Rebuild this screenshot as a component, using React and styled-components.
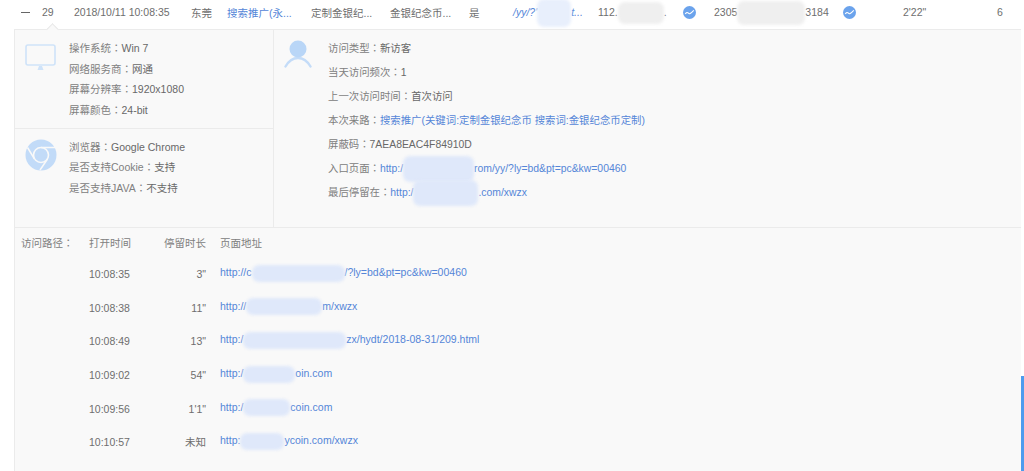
import React from "react";
import styled, { createGlobalStyle } from "styled-components";

const GlobalStyle = createGlobalStyle`
  html, body {
    margin: 0;
    padding: 0;
    background: #fff;
    overflow: hidden;
  }
  body {
    font-family: "Liberation Sans", "Noto Sans CJK SC", sans-serif;
    font-size: 10.5px;
    color: #707070;
  }
`;

const Page = styled.div`
  position: relative;
  width: 1024px;
  height: 471px;
  overflow: hidden;
`;

const VisitRow = styled.div`
  display: grid;
  grid-template-columns: 21px 32px 117px 36px 84px 79px 79px 44px 85px 85px 31px 129px 60px 94px 27px;
  height: 24px;
  padding: 0 0 5px 21px;
  align-items: center;
  white-space: nowrap;
  color: #6e6e6e;
`;

const Collapse = styled.span`
  display: block;
  width: 9px;
  height: 1px;
  background: #666;
`;

const RowLink = styled.span`
  color: #5586d8;
  font-style: ${(props) => (props.italic ? "italic" : "normal")};
`;

const Smudge = styled.span`
  display: inline-block;
  vertical-align: middle;
  width: ${(props) => props.w}px;
  height: ${(props) => props.h || 15}px;
  margin: -14px 0;
  background: ${(props) => props.color || "#dfe8fa"};
  border-radius: 7px;
  filter: blur(1.5px);
`;

const Colon = styled.span`
  font-family: "Noto Sans CJK TC", sans-serif;
`;

const Panel = styled.div`
  position: relative;
  width: 1006px;
  height: 441px;
  margin-left: 14px;
  background: #f9f9f9;
  border-top: 1px solid #ebebeb;
  border-left: 1px solid #ebebeb;
`;

const Caret = styled.span`
  position: absolute;
  left: 33px;
  top: -5px;
  width: 8px;
  height: 8px;
  background: #f9f9f9;
  border-top: 1px solid #e8e8e8;
  border-left: 1px solid #e8e8e8;
  transform: rotate(45deg);
`;

const InfoArea = styled.div`
  display: flex;
  height: 197px;
  border-bottom: 1px solid #ebebeb;
`;

const DeviceColumn = styled.div`
  display: flex;
  flex-direction: column;
  width: 258px;
  border-right: 1px solid #ebebeb;
`;

const DeviceBlock = styled.div`
  display: flex;
  flex: 1;
  padding-left: 10px;
  & + & {
    border-top: 1px solid #ebebeb;
  }
`;

const IconSlot = styled.div`
  width: 44px;
  flex: none;
  padding-top: ${(props) => props.top}px;
`;

const LineList = styled.div`
  display: flex;
  flex-direction: column;
  padding-top: ${(props) => props.top}px;
`;

const InfoLine = styled.div`
  height: ${(props) => props.h}px;
  line-height: ${(props) => props.h}px;
  white-space: nowrap;
  color: #808080;
`;

const Value = styled.span`
  color: #686868;
`;

const VisitorColumn = styled.div`
  display: flex;
  flex: 1;
  padding-left: 10px;
  font-size: 10.4px;
`;

const PathArea = styled.div`
  display: grid;
  grid-template-columns: 68px 66px 51px 1fr;
  grid-template-rows: 23.5px;
  grid-auto-rows: 33.7px;
  padding: 5px 0 0 6px;
  white-space: nowrap;
`;

const PathHead = styled.div`
  line-height: 20px;
  height: 20px;
  color: #808080;
  text-align: ${(props) => (props.right ? "right" : "left")};
  padding-left: ${(props) => props.pad || 0}px;
`;

const PathCell = styled.div`
  grid-column: ${(props) => props.col};
  line-height: 20px;
  margin-top: 7.5px;
  color: #6e6e6e;
  text-align: ${(props) => (props.right ? "right" : "left")};
`;

const PathLink = styled.div`
  grid-column: 4;
  line-height: 20px;
  margin-top: 5.5px;
  padding-left: 14px;
  color: #5586d8;
`;

const ScrollThumb = styled.div`
  position: absolute;
  right: 0;
  top: 376px;
  bottom: 0;
  width: 3px;
  background: #4d9bee;
`;

const pathRows = [
  { time: "10:08:35", stay: '3"', before: "http://c", w: 93, after: "/?ly=bd&pt=pc&kw=00460" },
  { time: "10:08:38", stay: '11"', before: "http://", w: 76, after: "m/xwzx" },
  { time: "10:08:49", stay: '13"', before: "http:/", w: 103, after: "zx/hydt/2018-08-31/209.html" },
  { time: "10:09:02", stay: '54"', before: "http:/", w: 52, after: "oin.com" },
  { time: "10:09:56", stay: "1'1\"", before: "http:/", w: 47, after: "coin.com" },
  { time: "10:10:57", stay: "未知", before: "http:", w: 44, after: "ycoin.com/xwzx" },
];

function MonitorIcon() {
  return (
    <svg width="32" height="28" viewBox="0 0 32 28">
      <rect x="1" y="1" width="29" height="20" rx="2" fill="none" stroke="#cfe3f9" strokeWidth="1.6" />
      <path d="M14 22h3l1.5 4h-6z" fill="#cfe3f9" />
    </svg>
  );
}

function ChromeIcon() {
  return (
    <svg width="32" height="32" viewBox="0 0 32 32">
      <circle cx="16" cy="16" r="15.5" fill="#c2dbf8" />
      <circle cx="16" cy="16" r="7.5" fill="none" stroke="#f9f9f9" strokeWidth="1.6" />
      <circle cx="16" cy="16" r="4.8" fill="#c2dbf8" />
      <path d="M16 8.5h14.5M9.5 20L2.5 8.5M22.5 20L15 31" stroke="#f9f9f9" strokeWidth="1.5" fill="none" />
    </svg>
  );
}

function UserIcon() {
  return (
    <svg width="28" height="28" viewBox="0 0 28 28">
      <path d="M1.5 26.5C5 20.5 9 18 14 18S23 20.5 26.5 26.5" fill="none" stroke="#c4dcf8" strokeWidth="2.4" strokeLinecap="round" />
      <circle cx="14" cy="9" r="8.5" fill="#b9d6f7" />
    </svg>
  );
}

function TrendIcon() {
  return (
    <svg width="13" height="13" viewBox="0 0 13 13">
      <circle cx="6.5" cy="6.5" r="6.5" fill="#6ba3ec" />
      <path d="M2.2 8C3.5 6.2 4.4 6 5.4 7.2S7.5 7.8 10.8 4.4" fill="none" stroke="#fff" strokeWidth="1.1" />
    </svg>
  );
}

export default function App() {
  return (
    <Page>
      <GlobalStyle />
      <VisitRow>
        <Collapse />
        <span>29</span>
        <span>2018/10/11 10:08:35</span>
        <span>东莞</span>
        <RowLink>搜索推广(永...</RowLink>
        <span>定制金银纪...</span>
        <span>金银纪念币...</span>
        <span>是</span>
        <RowLink italic>
          /yy/?'<Smudge w={34} h={28} color="#e8effc" />t...
        </RowLink>
        <span>
          112.<Smudge w={46} h={22} color="#efefef" />.
        </span>
        <TrendIcon />
        <span>
          2305<Smudge w={68} h={24} color="#efefef" />3184
        </span>
        <TrendIcon />
        <span>2'22"</span>
        <span>6</span>
      </VisitRow>
      <Panel>
        <Caret />
        <InfoArea>
          <DeviceColumn>
            <DeviceBlock>
              <IconSlot top={14}>
                <MonitorIcon />
              </IconSlot>
              <LineList top={8}>
                <InfoLine h={20.7}>操作系统<Colon>：</Colon><Value>Win 7</Value></InfoLine>
                <InfoLine h={20.7}>网络服务商<Colon>：</Colon><Value>网通</Value></InfoLine>
                <InfoLine h={20.7}>屏幕分辨率<Colon>：</Colon><Value>1920x1080</Value></InfoLine>
                <InfoLine h={20.7}>屏幕颜色<Colon>：</Colon><Value>24-bit</Value></InfoLine>
              </LineList>
            </DeviceBlock>
            <DeviceBlock>
              <IconSlot top={10}>
                <ChromeIcon />
              </IconSlot>
              <LineList top={7.5}>
                <InfoLine h={20.7}>浏览器<Colon>：</Colon><Value>Google Chrome</Value></InfoLine>
                <InfoLine h={20.7}>是否支持Cookie<Colon>：</Colon><Value>支持</Value></InfoLine>
                <InfoLine h={20.7}>是否支持JAVA<Colon>：</Colon><Value>不支持</Value></InfoLine>
              </LineList>
            </DeviceBlock>
          </DeviceColumn>
          <VisitorColumn>
            <IconSlot top={10}>
              <UserIcon />
            </IconSlot>
            <LineList top={6}>
              <InfoLine h={24}>访问类型<Colon>：</Colon><Value>新访客</Value></InfoLine>
              <InfoLine h={24}>当天访问频次<Colon>：</Colon><Value>1</Value></InfoLine>
              <InfoLine h={24}>上一次访问时间<Colon>：</Colon><Value>首次访问</Value></InfoLine>
              <InfoLine h={24}>
                本次来路<Colon>：</Colon><RowLink>搜索推广(关键词:定制金银纪念币 搜索词:金银纪念币定制)</RowLink>
              </InfoLine>
              <InfoLine h={24}>屏蔽码<Colon>：</Colon><Value>7AEA8EAC4F84910D</Value></InfoLine>
              <InfoLine h={24}>
                入口页面<Colon>：</Colon><RowLink>http:/<Smudge w={71} h={26} />rom/yy/?ly=bd&amp;pt=pc&amp;kw=00460</RowLink>
              </InfoLine>
              <InfoLine h={24}>
                最后停留在<Colon>：</Colon><RowLink>http:/<Smudge w={65} h={26} />.com/xwzx</RowLink>
              </InfoLine>
            </LineList>
          </VisitorColumn>
        </InfoArea>
        <PathArea>
          <PathHead>访问路径<Colon>：</Colon></PathHead>
          <PathHead>打开时间</PathHead>
          <PathHead right>停留时长</PathHead>
          <PathHead pad={14}>页面地址</PathHead>
          {pathRows.map((row) => (
            <React.Fragment key={row.time}>
              <PathCell col={2}>{row.time}</PathCell>
              <PathCell col={3} right>{row.stay}</PathCell>
              <PathLink>
                {row.before}
                <Smudge w={row.w} h={17} />
                {row.after}
              </PathLink>
            </React.Fragment>
          ))}
        </PathArea>
      </Panel>
      <ScrollThumb />
    </Page>
  );
}
